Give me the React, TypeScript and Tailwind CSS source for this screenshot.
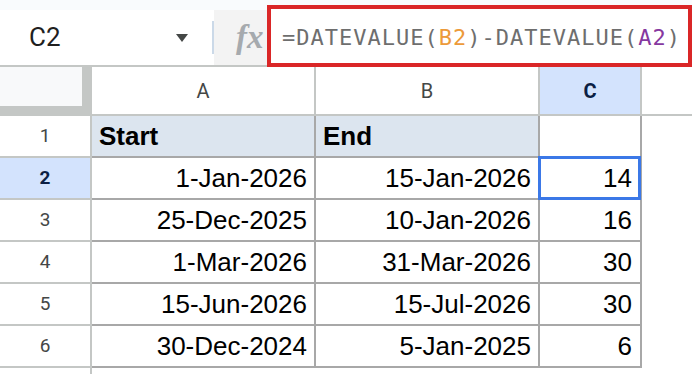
const rows = [
  { n: 1, a: 'Start', b: 'End', c: '', head: true },
  { n: 2, a: '1-Jan-2026', b: '15-Jan-2026', c: '14' },
  { n: 3, a: '25-Dec-2025', b: '10-Jan-2026', c: '16' },
  { n: 4, a: '1-Mar-2026', b: '31-Mar-2026', c: '30' },
  { n: 5, a: '15-Jun-2026', b: '15-Jul-2026', c: '30' },
  { n: 6, a: '30-Dec-2024', b: '5-Jan-2025', c: '6' },
]

const selectedRow = 2

function ColHeader({ label, active }: { label: string; active?: boolean }) {
  return (
    <div
      className={`flex h-full items-center justify-center border-r-2 border-b-2 border-[#c4c7c5] text-[20px] ${
        active ? 'bg-[#d3e3fd] font-bold text-[#0b1f44]' : 'bg-white text-[#444746]'
      }`}
    >
      {label}
    </div>
  )
}

export default function App() {
  return (
    <div className="relative h-[374px] w-[692px] overflow-hidden bg-white font-['Roboto',sans-serif]">
      {/* formula bar */}
      <div className="flex h-[67px] items-start border-b-2 border-[#c4c7c5] bg-[#f9fbfd]">
        <div className="mt-[10px] flex h-[55px] w-[214px] shrink-0 items-center bg-white">
          <span className="ml-[29px] text-[26px] text-[#1f1f1f]">C2</span>
          <svg className="ml-auto mr-[24px]" width="12" height="8" viewBox="0 0 12 8">
            <path d="M0 0h12L6 8z" fill="#444746" />
          </svg>
          <div className="h-[33px] w-[2px] bg-[#cbd9e8]" />
        </div>
        <div className="mt-[10px] flex h-[55px] w-[53px] shrink-0 items-center bg-[#f3f3f3] pl-[22px]">
          <span className="font-['Liberation_Serif',serif] text-[33px] font-bold italic leading-none text-[#a6aaae]">
            fx
          </span>
        </div>
        <div className="relative z-10 mt-[5px] flex h-[62px] flex-1 items-center border-4 border-[#da2627] bg-white pl-[11px]">
          <span className="pt-[2px] font-['DejaVu_Sans_Mono',monospace] text-[22px] tracking-[1px] text-[#6e6e6e]">
            =DATEVALUE(<span className="text-[#ec9a3a]">B2</span>)-DATEVALUE(
            <span className="text-[#86389f]">A2</span>)
          </span>
        </div>
      </div>

      {/* column headers */}
      <div className="flex h-[49px]">
        <div className="h-full w-[92px] shrink-0 bg-[#c4c7c5]">
          <div className="h-[39px] w-[82px] bg-[#f8f9fa]" />
        </div>
        <div className="w-[224px] shrink-0"><ColHeader label="A" /></div>
        <div className="w-[224px] shrink-0"><ColHeader label="B" /></div>
        <div className="w-[102px] shrink-0"><ColHeader label="C" active /></div>
        <div className="flex-1 border-b-2 border-[#c4c7c5]" />
      </div>

      {/* rows */}
      {rows.map((r) => {
        const sel = r.n === selectedRow
        return (
          <div key={r.n} className="flex h-[42px]">
            <div
              className={`flex w-[92px] shrink-0 items-center justify-center border-r-2 border-b-2 border-[#c4c7c5] text-[19px] ${
                sel ? 'bg-[#d3e3fd] font-bold text-[#0b1f44]' : 'text-[#444746]'
              }`}
            >
              {r.n}
            </div>
            <div className="flex flex-1 font-['Liberation_Sans',Arial,sans-serif] text-[26px] text-black">
              <div
                className={`flex w-[224px] shrink-0 items-center border-r-2 border-b-2 border-[#a8a8a8] ${
                  r.head ? 'bg-[#dce5ef] pl-[7px] font-bold' : 'justify-end pr-[7px]'
                }`}
              >
                {r.a}
              </div>
              <div
                className={`flex w-[224px] shrink-0 items-center border-r-2 border-b-2 border-[#a8a8a8] ${
                  r.head ? 'bg-[#dce5ef] pl-[7px] font-bold' : 'justify-end pr-[7px]'
                }`}
              >
                {r.b}
              </div>
              <div className="relative flex w-[102px] shrink-0 items-center justify-end border-r-2 border-b-2 border-[#a8a8a8] pr-[8px]">
                {r.c}
                {sel && (
                  <div className="absolute -top-[2px] -right-[1px] -bottom-[2px] -left-[2px] border-[3px] border-[#3b78e7]" />
                )}
              </div>
              <div className="flex-1" />
            </div>
          </div>
        )
      })}

      {/* partial row 7 */}
      <div className="flex h-[20px]">
        <div className="w-[92px] shrink-0 border-r-2 border-[#c4c7c5]" />
      </div>
    </div>
  )
}
